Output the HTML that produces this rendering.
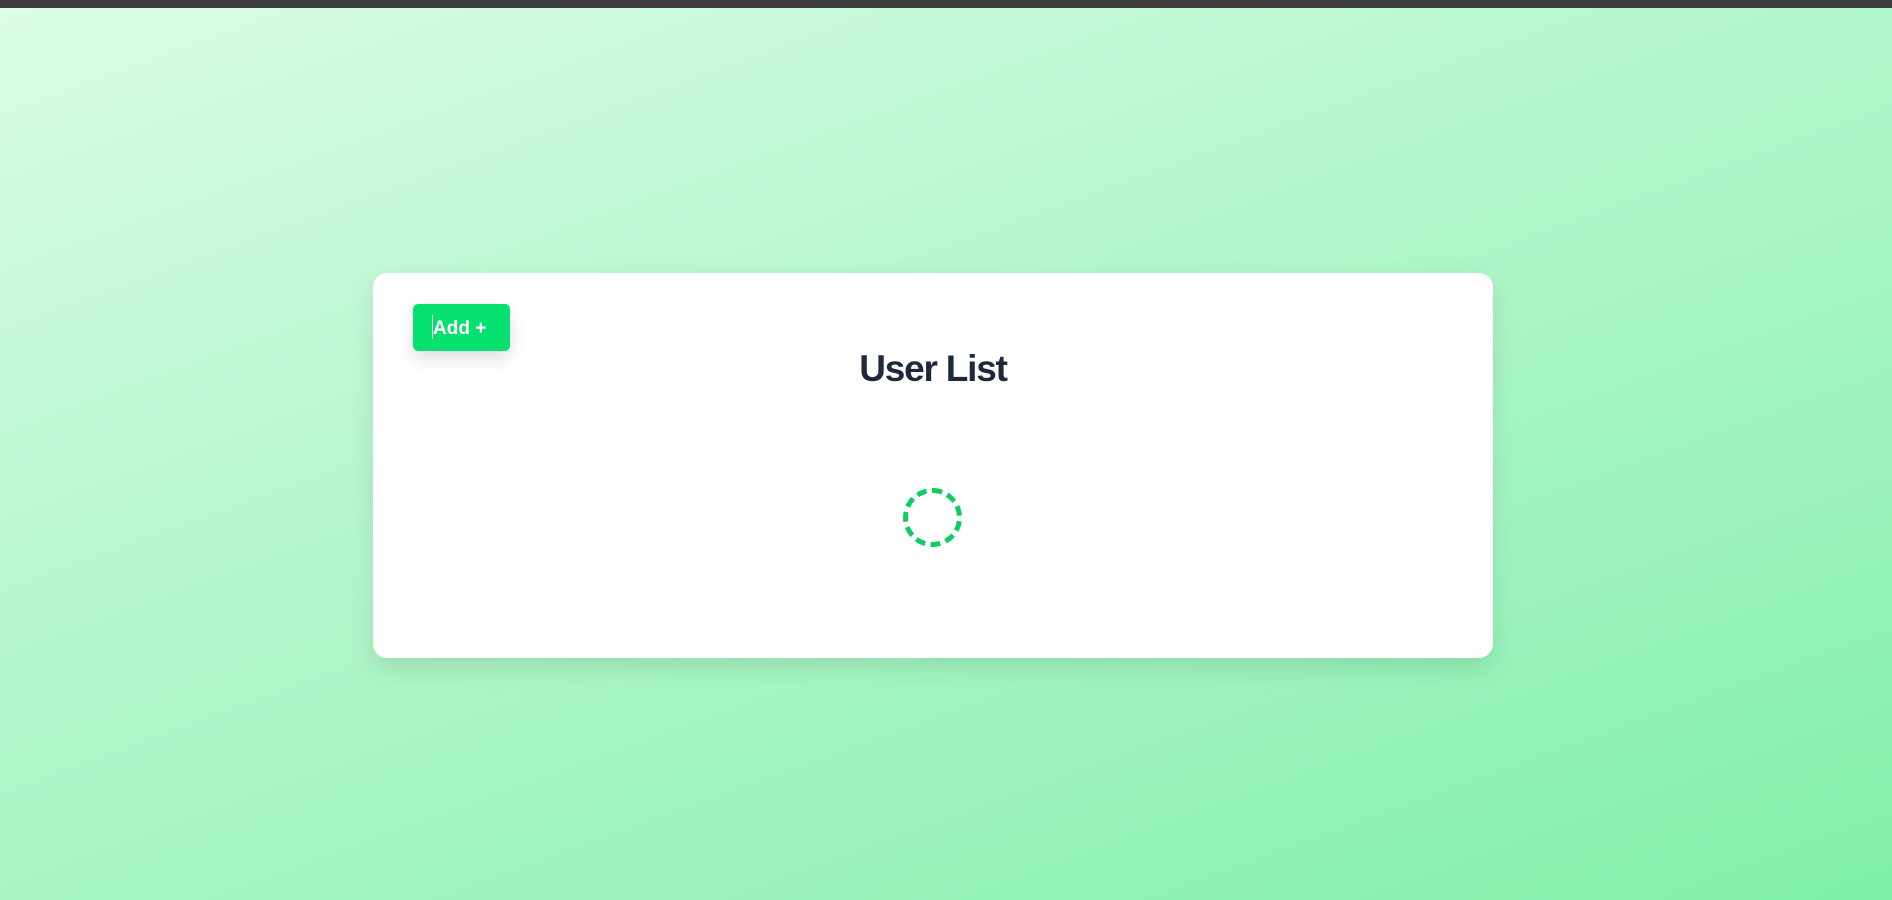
<!DOCTYPE html>
<html><head><style>
html,body{margin:0;padding:0;}
body{width:1892px;height:900px;overflow:hidden;position:relative;background:linear-gradient(160deg,#dcfce6 0%,#b9f7d0 35%,#9ef3bd 70%,#80efa8 100%);font-family:"Liberation Sans",sans-serif;}
.bar{position:absolute;left:0;top:0;width:1892px;height:8px;background:#3c3c3c;}
.card{position:absolute;left:373px;top:273px;width:1120px;height:385px;background:#fff;border-radius:14px;box-shadow:0 10px 25px rgba(0,0,0,0.1);}
.btn{position:absolute;left:40px;top:31px;width:97px;height:47px;background:#05e06f;border-radius:5px;box-shadow:0 8px 18px rgba(0,0,0,0.12);color:#fff;font-weight:bold;font-size:19px;line-height:50px;box-sizing:border-box;padding-left:20px;}
.btn:before{content:"";position:absolute;left:19px;top:11px;width:1px;height:24px;background:#fff;}
h1{position:absolute;left:0;right:0;top:75px;margin:0;text-align:center;font-size:37px;letter-spacing:-1.2px;color:#1e293b;font-weight:bold;}
.spin{position:absolute;left:530px;top:215px;width:49px;height:49px;border:5px dashed #0fcc63;border-radius:50%;}
</style></head><body>
<div class="bar"></div>
<div class="card">
<div class="btn">Add +</div>
<h1>User List</h1>
<div class="spin"></div>
</div>
</body></html>
